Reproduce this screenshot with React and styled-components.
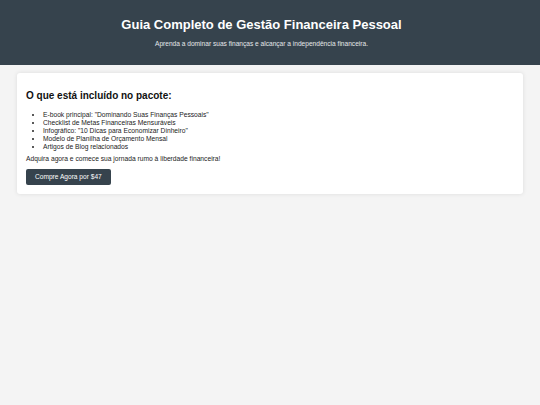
import React from "react";
import styled, { createGlobalStyle } from "styled-components";

const Global = createGlobalStyle`
  body {
    margin: 0;
    background: #f4f4f4;
    font-family: "Liberation Sans", Arial, sans-serif;
    color: #222;
  }
`;

const Header = styled.header`
  background: #36434d;
  color: #fff;
  text-align: center;
  padding: 17px 17px 0 0;
  height: 65px;
  box-sizing: border-box;
  h1 {
    margin: 0;
    font-size: 13px;
    line-height: 15px;
    font-weight: 700;
  }
  p {
    margin: 8px 0 0;
    font-size: 6.6px;
    line-height: 8px;
    color: #e4e7ea;
  }
`;

const Main = styled.main`
  padding: 8px 17px;
`;

const Card = styled.section`
  background: #fff;
  border-radius: 3px;
  box-shadow: 0 0 4px rgba(0, 0, 0, 0.1);
  padding: 17px 9px 9px;
  h2 {
    margin: 0 0 9px;
    font-size: 10px;
    line-height: 12px;
    font-weight: 700;
    color: #111;
  }
  ul {
    margin: 0 0 4px;
    padding-left: 17px;
    font-size: 6.7px;
    line-height: 7.9px;
  }
  p {
    margin: 0 0 6px;
    font-size: 6.7px;
    line-height: 8px;
  }
`;

const Button = styled.button`
  display: block;
  background: #36434d;
  color: #fff;
  border: none;
  border-radius: 2px;
  font-family: inherit;
  font-size: 6.6px;
  padding: 0 9px;
  height: 16px;
`;

export default function App() {
  return (
    <>
      <Global />
      <Header>
        <h1>Guia Completo de Gestão Financeira Pessoal</h1>
        <p>Aprenda a dominar suas finanças e alcançar a independência financeira.</p>
      </Header>
      <Main>
        <Card>
          <h2>O que está incluído no pacote:</h2>
          <ul>
            <li>E-book principal: "Dominando Suas Finanças Pessoais"</li>
            <li>Checklist de Metas Financeiras Mensuráveis</li>
            <li>Infográfico: "10 Dicas para Economizar Dinheiro"</li>
            <li>Modelo de Planilha de Orçamento Mensal</li>
            <li>Artigos de Blog relacionados</li>
          </ul>
          <p>Adquira agora e comece sua jornada rumo à liberdade financeira!</p>
          <Button>Compre Agora por $47</Button>
        </Card>
      </Main>
    </>
  );
}
